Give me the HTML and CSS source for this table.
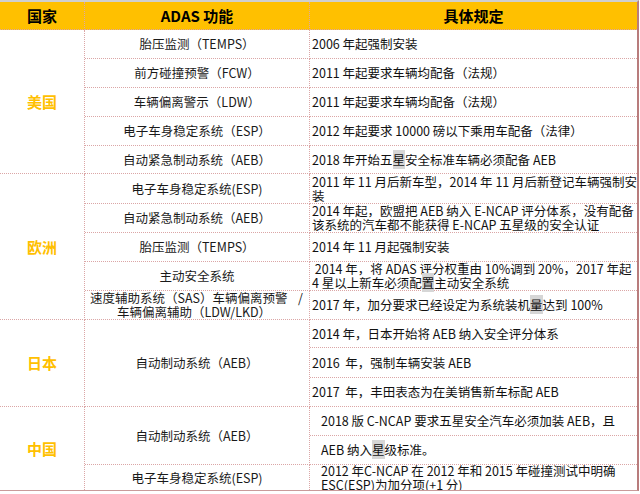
FILE: index.html
```html
<!DOCTYPE html>
<html lang="zh">
<head>
<meta charset="utf-8">
<title>ADAS 功能</title>
<link rel="stylesheet" href="styles.css">
</head>
<body>
<div class="sheet">
  <div class="hd c1">国家</div>
  <div class="hd c2">ADAS 功能</div>
  <div class="hd c3">具体规定</div>

  <div class="country us">美国</div>
  <div class="fn r1">胎压监测（TEMPS）</div>
  <div class="rule r1">2006 年起强制安装</div>
  <div class="fn r2">前方碰撞预警（FCW）</div>
  <div class="rule r2">2011 年起要求车辆均配备（法规）</div>
  <div class="fn r3">车辆偏离警示（LDW）</div>
  <div class="rule r3">2011 年起要求车辆均配备（法规）</div>
  <div class="fn r4">电子车身稳定系统（ESP）</div>
  <div class="rule r4">2012 年起要求 10000 磅以下乘用车配备（法律）</div>
  <div class="fn r5">自动紧急制动系统（AEB）</div>
  <div class="rule r5"><span class="t">2018 年开始五<span class="hl">星</span>安全标准车辆必须配备 AEB</span></div>

  <div class="country eu">欧洲</div>
  <div class="fn r6">电子车身稳定系统(ESP)</div>
  <div class="rule r6"><span class="t">2011 年 11 月后新车型，2014 年 11 月后新登记车辆强制安<br>装</span></div>
  <div class="fn r7">自动紧急制动系统（AEB）</div>
  <div class="rule r7"><span class="t">2014 年起，欧盟把 AEB 纳入 E-NCAP 评分体系，没有配备<br>该系统的汽车都不能获得 E-NCAP 五星级的安全认证</span></div>
  <div class="fn r8">胎压监测（TEMPS）</div>
  <div class="rule r8">2014 年 11 月起强制安装</div>
  <div class="fn r9">主动安全系统</div>
  <div class="rule r9"><span class="t">&nbsp;2014 年，将 ADAS 评分权重由 10%调到 20%，2017 年起<br>4 星以上新车必须配<span class="hl">置</span>主动安全系统</span></div>
  <div class="fn two r10"><span class="line1"><span>速度辅助系统（SAS）车辆偏离预警</span><span>/</span></span><span class="line2">车辆偏离辅助（LDW/LKD）</span></div>
  <div class="rule r10"><span class="t">2017 年，加分要求已经设定为系统装机<span class="hl">量</span>达到 100%</span></div>

  <div class="country jp">日本</div>
  <div class="fn jpfn">自动制动系统（AEB）</div>
  <div class="rule r11">2014 年，日本开始将 AEB 纳入安全评分体系</div>
  <div class="rule r12">2016&nbsp; 年，强制车辆安装 AEB</div>
  <div class="rule r13">2017&nbsp; 年，丰田表态为在美销售新车标配 AEB</div>

  <div class="country cn">中国</div>
  <div class="fn cnfn">自动制动系统（AEB）</div>
  <div class="rule ind r14">2018 版 C-NCAP 要求五星安全汽车必须加装 AEB，且</div>
  <div class="rule ind r15"><span class="t">AEB 纳入<span class="hl">星</span>级标准。</span></div>
  <div class="fn r16">电子车身稳定系统(ESP)</div>
  <div class="rule ind r16"><span class="t">2012 年C-NCAP 在 2012 年和 2015 年碰撞测试中明确<br>ESC(ESP)为加分项(+1 分)</span></div>
</div>
</body>
</html>
```

FILE: styles.css
```css
html, body {
  margin: 0;
  padding: 0;
  background: #ffffff;
}

body {
  width: 640px;
  height: 494px;
  overflow: hidden;
  font-family: "Noto Sans CJK SC", "Noto Sans", sans-serif;
  color: #111111;
}

.sheet {
  box-sizing: border-box;
  width: 639px;
  height: 491px;
  border-top: 2px solid #cfcfcf;
  border-right: 2px solid #b87c7c;
  border-bottom: 1px solid #c99a9a;
  display: grid;
  grid-template-columns: 85px 225px 1fr;
  grid-template-rows: 28px 29px 29px 29px 29px 28px 30px 29px 29px 29px 29px 28px 30px 29px 29px 29px 25px;
  overflow: hidden;
}

.sheet > div {
  box-sizing: border-box;
  border-right: 1px dotted #dba6a6;
  border-bottom: 1px dotted #dba6a6;
  display: flex;
  align-items: center;
  font-size: 12.5px;
  line-height: 14px;
  white-space: nowrap;
  min-width: 0;
}

.t {
  display: block;
}

.sheet > .c3,
.sheet > .rule {
  border-right: none;
}

.hd {
  background: #ffc000;
  font-weight: bold;
  font-size: 15px !important;
  color: #000000;
  justify-content: center;
  grid-row: 1;
}
.hd.c1 { grid-column: 1; }
.hd.c2 { grid-column: 2; }
.hd.c3 { grid-column: 3; }

.country {
  grid-column: 1;
  justify-content: center;
  color: #ffc000;
  font-weight: bold;
  font-size: 15px !important;
}
.country.us { grid-row: 2 / 7; }
.country.eu { grid-row: 7 / 12; }
.country.jp { grid-row: 12 / 15; }
.country.cn { grid-row: 15 / 18; border-bottom: none !important; }

.fn {
  grid-column: 2;
  justify-content: center;
  text-align: center;
  color: #1a1a1a;
}

.rule {
  grid-column: 3;
  padding-left: 2px;
  color: #111111;
}

.rule.ind {
  padding-left: 11px;
}

.fn.two {
  flex-direction: column;
  align-items: stretch;
  justify-content: center;
}

.line1 {
  display: flex;
  justify-content: space-between;
  padding: 0 6px 0 5px;
}

.line2 {
  display: block;
  text-align: center;
  padding-right: 6px;
}

.hl {
  background: #d6d6d6;
}

.r1 { grid-row: 2; }
.r2 { grid-row: 3; }
.r3 { grid-row: 4; }
.r4 { grid-row: 5; }
.r5 { grid-row: 6; }
.r6 { grid-row: 7; }
.r7 { grid-row: 8; }
.r8 { grid-row: 9; }
.r9 { grid-row: 10; }
.r10 { grid-row: 11; }
.r11 { grid-row: 12; }
.r12 { grid-row: 13; }
.r13 { grid-row: 14; }
.r14 { grid-row: 15; }
.r15 { grid-row: 16; }
.r16 { grid-row: 17; border-bottom: none !important; }

.jpfn { grid-row: 12 / 15; }
.cnfn { grid-row: 15 / 17; }
```
